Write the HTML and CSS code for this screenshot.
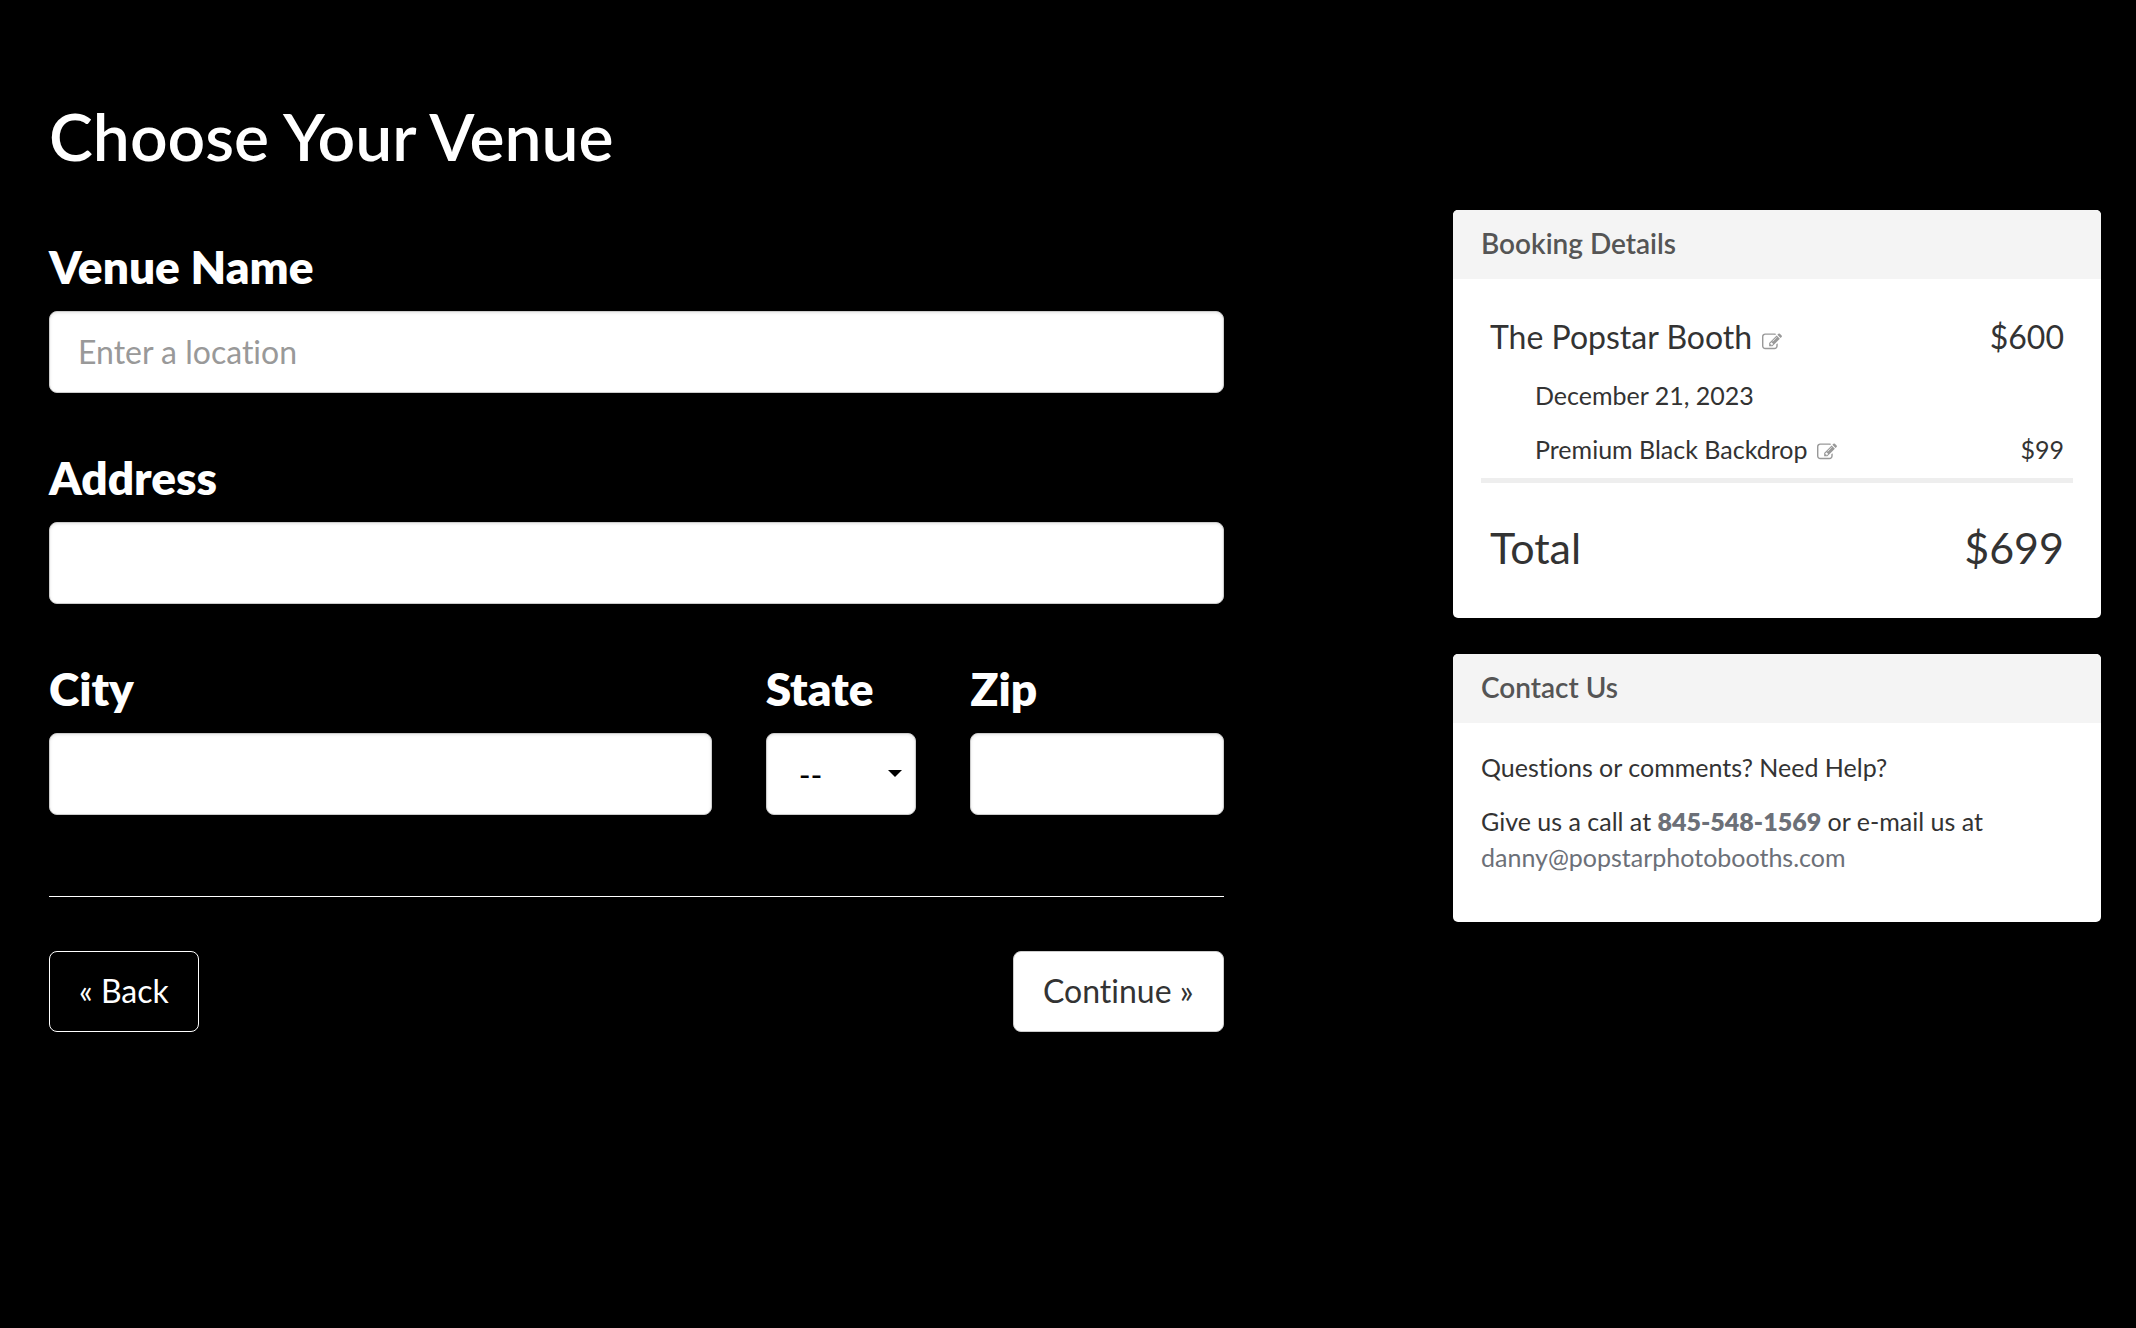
FILE: index.html
```html
<!DOCTYPE html>
<html lang="en">
<head>
<meta charset="utf-8">
<meta name="viewport" content="width=device-width, initial-scale=1">
<title>Choose Your Venue</title>
<link rel="stylesheet" href="styles.css">
</head>
<body>
<svg class="sprite" aria-hidden="true">
  <symbol id="edit" viewBox="0 0 1792 1792"><path d="M888 1184l116-116-152-152-116 116v56h96v96h56zm440-720q-16-16-33 1l-350 350q-17 17-1 33t33-1l350-350q17-17 1-33zm80 594v190q0 119-84.5 203.5t-203.5 84.5h-832q-119 0-203.5-84.5t-84.5-203.5v-832q0-119 84.5-203.5t203.5-84.5h832q63 0 117 25 15 7 18 23 3 17-9 29l-49 49q-14 14-32 8-23-6-45-6h-832q-66 0-113 47t-47 113v832q0 66 47 113t113 47h832q66 0 113-47t47-113v-126q0-13 9-22l64-64q15-15 35-7t20 29zm-96-738l288 288-672 672h-288v-288zm444 132l-92 92-288-288 92-92q28-28 68-28t68 28l152 152q28 28 28 68t-28 68z"/></symbol>
</svg>
<div class="page">
  <main class="venue">
    <h1 class="title">Choose Your Venue</h1>
    <form class="form">
      <div class="field">
        <label class="label" for="venue">Venue Name</label>
        <input class="control" id="venue" type="text" placeholder="Enter a location">
      </div>
      <div class="field">
        <label class="label" for="address">Address</label>
        <input class="control" id="address" type="text">
      </div>
      <div class="field-row">
        <div class="field field-city">
          <label class="label" for="city">City</label>
          <input class="control" id="city" type="text">
        </div>
        <div class="field field-state">
          <label class="label" for="state">State</label>
          <div class="select">
            <select class="control" id="state"><option>--</option><option>NJ</option><option>NY</option></select>
          </div>
        </div>
        <div class="field field-zip">
          <label class="label" for="zip">Zip</label>
          <input class="control" id="zip" type="text">
        </div>
      </div>
      <div class="actions">
        <button class="button button-back" type="button">« Back</button>
        <button class="button button-next" type="submit">Continue »</button>
      </div>
    </form>
  </main>
  <aside class="sidebar">
    <section class="card">
      <h2 class="card-title">Booking Details</h2>
      <div class="card-body">
        <table class="booking">
          <tbody>
            <tr class="item"><td>The Popstar Booth<a class="edit" href="#" aria-label="Edit package"><svg class="icon"><use href="#edit"/></svg></a></td><td class="price">$600</td></tr>
            <tr class="detail"><td>December 21, 2023</td><td class="price"></td></tr>
            <tr class="detail"><td>Premium Black Backdrop<a class="edit" href="#" aria-label="Edit backdrop"><svg class="icon"><use href="#edit"/></svg></a></td><td class="price">$99</td></tr>
          </tbody>
          <tfoot>
            <tr class="total"><td>Total</td><td class="price">$699</td></tr>
          </tfoot>
        </table>
      </div>
    </section>
    <section class="card">
      <h2 class="card-title">Contact Us</h2>
      <div class="card-body">
        <p class="text">Questions or comments? Need Help?</p>
        <p class="text">Give us a call at <a class="link phone" href="tel:8455481569">845-548-1569</a> or e-mail us at <a class="link" href="mailto:danny@popstarphotobooths.com">danny@popstarphotobooths.com</a></p>
      </div>
    </section>
  </aside>
</div>
</body>
</html>
```
FILE: styles.css
```css
* { box-sizing: border-box; }

body {
  margin: 0;
  background: #000;
  color: #333;
  font-family: Lato, "Liberation Sans", sans-serif;
  font-size: 25px;
  font-variant-ligatures: no-common-ligatures;
  line-height: 36px;
}

.sprite { display: none; }

.page {
  display: grid;
  grid-template-columns: repeat(12, minmax(0, 1fr));
  column-gap: 54px;
  align-items: start;
  padding: 94px 35px 54px 49px;
}

.venue { grid-column: span 7; }

.title {
  margin: 0 0 59px;
  color: #fff;
  font-size: 66px;
  font-weight: 600;
  line-height: 84px;
}

.form {
  display: flex;
  flex-direction: column;
  gap: 55px;
}

.label {
  display: block;
  margin-bottom: 14px;
  color: #fff;
  font-size: 46px;
  font-weight: 800;
  line-height: 60px;
}

.control {
  display: block;
  width: 100%;
  height: 82px;
  padding: 0 28px 2px;
  border: 1px solid #ccc;
  border-radius: 8px;
  background: #fff;
  box-shadow: inset 0 1px 3px rgba(0, 0, 0, 0.1);
  color: #000;
  font-family: inherit;
  font-size: 32px;
  font-variant-ligatures: inherit;
}

.control::placeholder { color: #999; opacity: 1; }

.field-row {
  display: grid;
  grid-template-columns: repeat(12, minmax(0, 1fr));
  column-gap: 54px;
}

.field-city { grid-column: span 7; }
.field-state { grid-column: span 2; }
.field-zip { grid-column: span 3; }

.select { position: relative; }

.select .control {
  appearance: none;
  padding: 0 32px;
}

.select::after {
  content: "";
  position: absolute;
  top: 37px;
  right: 14px;
  border: 7px solid transparent;
  border-top-color: #000;
  border-bottom: 0;
  pointer-events: none;
}

.actions {
  display: flex;
  justify-content: space-between;
  margin-top: 26px;
  padding-top: 54px;
  border-top: 1px solid #fff;
}

.button {
  height: 81px;
  padding: 0 29px 2px;
  border: 1px solid #fff;
  border-radius: 8px;
  font-family: inherit;
  font-size: 32px;
  font-variant-ligatures: inherit;
}

.button-back { background: #000; color: #fff; }
.button-next { border-color: #ccc; background: #fff; color: #333; }

.sidebar {
  grid-column: 9 / span 4;
  display: flex;
  flex-direction: column;
  gap: 36px;
  padding-top: 116px;
}

.card {
  overflow: hidden;
  border-radius: 5px;
  background: #fff;
}

.card-title {
  margin: 0;
  padding: 15px 28px 18px;
  background: #f4f4f4;
  color: #555;
  font-size: 28px;
  font-weight: 600;
  line-height: 36px;
}

.card-body { padding: 26px 28px 29px; }

.booking {
  width: 100%;
  border-spacing: 0;
}

.booking td { padding: 9px; }
.booking .price { text-align: right; }
.item { font-size: 32px; line-height: 45px; }
.booking .detail td:first-child { padding-left: 54px; }
.booking .detail:last-child td { padding-bottom: 11px; }
.total { font-size: 43px; line-height: 60px; }

.booking .total td {
  padding-top: 35px;
  padding-bottom: 11px;
  border-top: 5px solid #eee;
}

.edit { margin-left: 10px; color: #999; }

.icon {
  width: 20px;
  height: 20px;
  fill: currentColor;
  vertical-align: -3px;
}

.text { margin: 0 0 18px; }
.link { color: #6c7078; text-decoration: none; }
.phone { font-weight: 800; }
```
